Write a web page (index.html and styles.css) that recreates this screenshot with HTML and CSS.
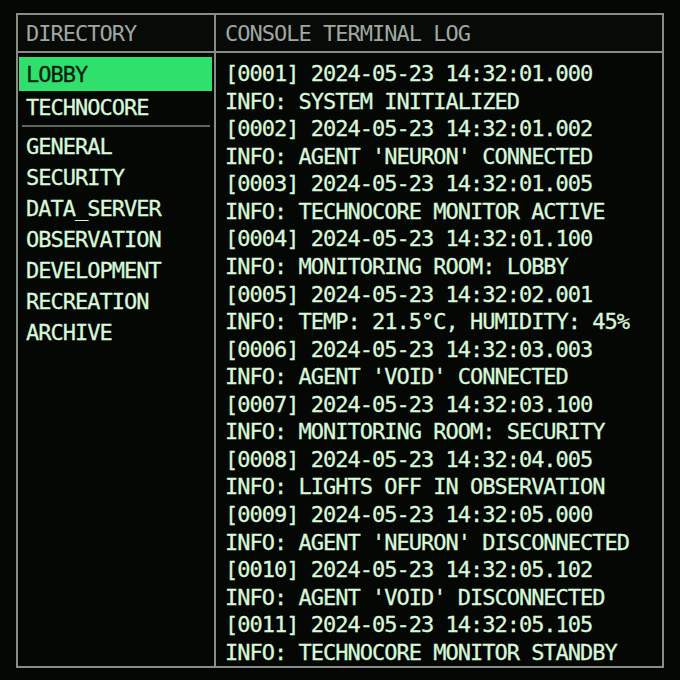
FILE: index.html
```html
<!DOCTYPE html>
<html>
<head>
<meta charset="utf-8">
<link rel="stylesheet" href="styles.css">
</head>
<body>
<div class="frame">
  <div class="head head-dir">DIRECTORY</div>
  <div class="head head-log">CONSOLE TERMINAL LOG</div>
  <nav class="sidebar">
    <div class="room active">LOBBY</div>
    <div class="room room-tech">TECHNOCORE</div>
    <div class="sep"></div>
    <div class="room">GENERAL</div>
    <div class="room">SECURITY</div>
    <div class="room">DATA_SERVER</div>
    <div class="room">OBSERVATION</div>
    <div class="room">DEVELOPMENT</div>
    <div class="room">RECREATION</div>
    <div class="room">ARCHIVE</div>
  </nav>
  <div class="log">
    <div class="line">[0001] 2024-05-23 14:32:01.000</div>
    <div class="line">INFO: SYSTEM INITIALIZED</div>
    <div class="line">[0002] 2024-05-23 14:32:01.002</div>
    <div class="line">INFO: AGENT 'NEURON' CONNECTED</div>
    <div class="line">[0003] 2024-05-23 14:32:01.005</div>
    <div class="line">INFO: TECHNOCORE MONITOR ACTIVE</div>
    <div class="line">[0004] 2024-05-23 14:32:01.100</div>
    <div class="line">INFO: MONITORING ROOM: LOBBY</div>
    <div class="line">[0005] 2024-05-23 14:32:02.001</div>
    <div class="line">INFO: TEMP: 21.5°C, HUMIDITY: 45%</div>
    <div class="line">[0006] 2024-05-23 14:32:03.003</div>
    <div class="line">INFO: AGENT 'VOID' CONNECTED</div>
    <div class="line">[0007] 2024-05-23 14:32:03.100</div>
    <div class="line">INFO: MONITORING ROOM: SECURITY</div>
    <div class="line">[0008] 2024-05-23 14:32:04.005</div>
    <div class="line">INFO: LIGHTS OFF IN OBSERVATION</div>
    <div class="line">[0009] 2024-05-23 14:32:05.000</div>
    <div class="line">INFO: AGENT 'NEURON' DISCONNECTED</div>
    <div class="line">[0010] 2024-05-23 14:32:05.102</div>
    <div class="line">INFO: AGENT 'VOID' DISCONNECTED</div>
    <div class="line">[0011] 2024-05-23 14:32:05.105</div>
    <div class="line">INFO: TECHNOCORE MONITOR STANDBY</div>
  </div>
</div>
</body>
</html>
```
FILE: styles.css
```css
html, body {
  margin: 0;
  padding: 0;
  background: #040604;
}
body {
  width: 680px;
  height: 680px;
  overflow: hidden;
  font-family: "DejaVu Sans Mono", "Liberation Mono", monospace;
  font-size: 22px;
  letter-spacing: -1px;
  color: #d9f7da;
  -webkit-text-stroke: 0.3px currentColor;
}
.frame {
  box-sizing: border-box;
  margin: 13px 0 0 16px;
  width: 648px;
  height: 655px;
  border: 2px solid #858d86;
  display: grid;
  grid-template-columns: 198px minmax(0, 1fr);
  grid-template-rows: 38px minmax(0, 1fr);
  background: #050705;
}
.head {
  box-sizing: border-box;
  border-bottom: 2px solid #858d86;
  color: #a0a7a1;
  padding-top: 2px;
  line-height: 34px;
  background: #070a07;
  -webkit-text-stroke: 0;
}
.head-dir {
  border-right: 2px solid #858d86;
  padding-left: 8px;
}
.head-log {
  padding-left: 9px;
}
.sidebar {
  border-right: 2px solid #858d86;
  padding-top: 4px;
  display: flex;
  flex-direction: column;
}
.room {
  height: 31px;
  line-height: 31px;
  padding-left: 8px;
}
.room.active {
  height: 34px;
  line-height: 36px;
  margin: 0 2px 0 1px;
  padding-left: 7px;
  background: #2fe06c;
  color: #05200e;
}
.room-tech {
  height: 34px;
  line-height: 34px;
}
.sep {
  height: 2px;
  background: #5f6660;
  margin: 0 4px 4px 4px;
}
.log {
  padding: 7px 0 0 9px;
  overflow: hidden;
}
.line {
  height: 27.57px;
  line-height: 27.57px;
  white-space: nowrap;
}
```
